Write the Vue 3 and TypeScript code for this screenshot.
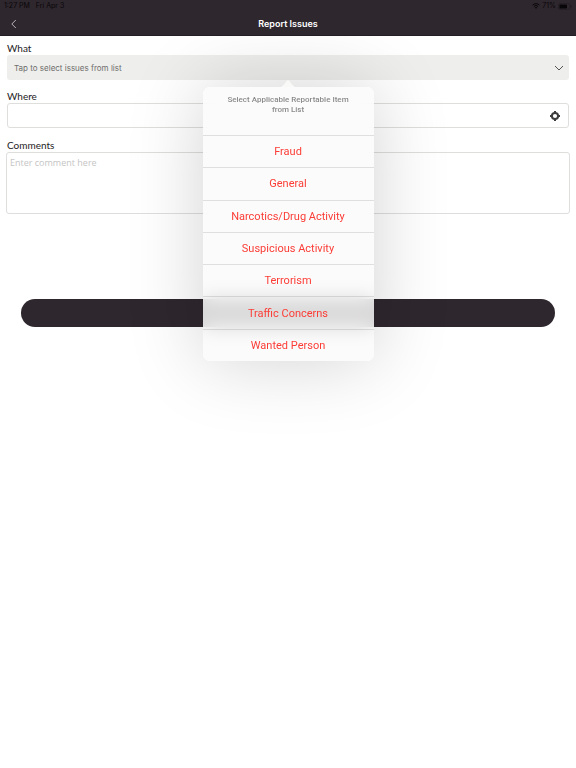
<script setup lang="ts">
import { ref } from 'vue'

const issues: string[] = [
  'Fraud',
  'General',
  'Narcotics/Drug Activity',
  'Suspicious Activity',
  'Terrorism',
  'Traffic Concerns',
  'Wanted Person',
]

const selected = ref('')
const place = ref('')
const comment = ref('')
const open = ref(true)

function choose(issue: string) {
  selected.value = issue
  open.value = false
}
</script>

<template>
  <div class="screen">
    <header class="top">
      <div class="status">
        <span>1:27 PM</span>
        <span>Fri Apr 3</span>
        <span class="status-right">
          <svg class="wifi" viewBox="0 0 16 12" aria-hidden="true">
            <path d="M1 4.2a10 10 0 0 1 14 0M3.600 7a6.200 6.200 0 0 1 8.800 0" fill="none" stroke="currentColor" stroke-width="2" />
            <path d="M5.500 9a3.600 3.600 0 0 1 5 0L8 11.600z" fill="currentColor" />
          </svg>
          <span>71%</span>
          <svg class="battery" viewBox="0 0 28 14" aria-hidden="true">
            <rect x="1" y="1" width="23" height="12" rx="3.500" fill="none" stroke="currentColor" stroke-opacity=".45" />
            <rect x="3" y="3" width="15" height="8" rx="1.500" fill="currentColor" />
            <path d="M25.500 5v4c1.300-.4 1.800-1.200 1.800-2s-.5-1.600-1.800-2z" fill="currentColor" fill-opacity=".5" />
          </svg>
        </span>
      </div>
      <nav class="bar">
        <button class="back" type="button" aria-label="Back">
          <svg viewBox="0 0 10 10" aria-hidden="true">
            <path d="M6.800 1 2.800 5l4 4" fill="none" stroke="currentColor" stroke-width=".9" />
          </svg>
        </button>
        <h1>Report Issues</h1>
      </nav>
    </header>

    <form class="form" @submit.prevent>
      <div class="field what">
        <label for="what">What</label>
        <button id="what" class="picker" type="button" :aria-expanded="open" @click="open = !open">
          <span>{{ selected || 'Tap to select issues from list' }}</span>
          <svg viewBox="0 0 10 10" aria-hidden="true">
            <path d="m1 3 4 4 4-4" fill="none" stroke="currentColor" stroke-width="1" />
          </svg>
        </button>
        <div v-if="open" class="popover" role="dialog" aria-labelledby="prompt">
          <svg class="arrow" viewBox="0 0 16 7" aria-hidden="true">
            <path d="M0 7C2 7 3 5.500 6.500 1.200Q8-.6 9.500 1.200C13 5.500 14 7 16 7z" fill="currentColor" />
          </svg>
          <div class="sheet">
            <p id="prompt" class="prompt">Select Applicable Reportable Item from List</p>
            <ul class="options">
              <li v-for="issue in issues" :key="issue">
                <button type="button" @click="choose(issue)">{{ issue }}</button>
              </li>
            </ul>
          </div>
        </div>
      </div>

      <div class="field">
        <label for="where">Where</label>
        <div class="where-box">
          <input id="where" v-model="place" type="text" />
          <button class="locate" type="button" aria-label="Use current location">
            <svg viewBox="0 0 12 12" aria-hidden="true">
              <circle cx="6" cy="6" r="3.100" fill="none" stroke="currentColor" stroke-width="2" />
              <path d="M6 1v2M6 9v2M1 6h2M9 6h2" stroke="currentColor" stroke-width="2" />
            </svg>
          </button>
        </div>
      </div>

      <div class="field comments">
        <label for="comments">Comments</label>
        <textarea id="comments" v-model="comment" placeholder="Enter comment here"></textarea>
      </div>

      <button class="submit" type="submit" aria-label="Submit report"></button>
    </form>
  </div>
</template>

<style>
body {
  margin: 0;
  background: #fff;
}
</style>

<style scoped>
.screen {
  min-height: 100vh;
  background: #fff;
  font-family: Inter, "Liberation Sans", sans-serif;
  color: #242124;
}
.screen *,
.screen {
  box-sizing: border-box;
}
button {
  margin: 0;
  padding: 0;
  border: 0;
  background: none;
  font: inherit;
  color: inherit;
  cursor: pointer;
}
.top {
  position: relative;
  z-index: 2;
  background: #2f272e;
  border-bottom: 1px solid #241d23;
}
.status {
  display: flex;
  align-items: center;
  gap: 6px;
  height: 12px;
  padding: 0 4px;
  font-size: 7px;
  line-height: 12px;
  color: #080608;
}
.status-right {
  display: flex;
  align-items: center;
  gap: 2px;
  margin-left: auto;
}
.wifi {
  width: 8px;
  height: 6px;
}
.battery {
  width: 14px;
  height: 7px;
}
.bar {
  display: grid;
  grid-template-columns: 28px 1fr 28px;
  align-items: center;
  height: 23px;
}
.back {
  display: grid;
  place-items: center;
  height: 23px;
  color: #c9c5c8;
}
.back svg {
  width: 10px;
  height: 10px;
}
h1 {
  margin: 0;
  text-align: center;
  font-family: Inter, sans-serif;
  font-size: 9px;
  line-height: 23px;
  font-weight: 600;
  color: #fff;
}
.form {
  display: flex;
  flex-direction: column;
  padding: 6px 7px;
}
.field {
  display: flex;
  flex-direction: column;
  margin-bottom: 10px;
}
label {
  font-family: Lato, "Liberation Sans", sans-serif;
  font-size: 10px;
  line-height: 13px;
}
.what {
  position: relative;
  z-index: 1;
}
.picker {
  display: flex;
  align-items: center;
  justify-content: space-between;
  height: 25px;
  padding: 0 5px 0 7px;
  border-radius: 3px;
  background: #eeeeec;
  font-family: Inter, "Liberation Sans", sans-serif;
  font-size: 8px;
  color: #6e6e6d;
}
.picker svg {
  width: 10px;
  height: 10px;
  color: #555;
}
.where-box {
  display: flex;
  height: 25px;
  border: 1px solid #dededd;
  border-radius: 3px;
}
.where-box input {
  flex: 1;
  min-width: 0;
  padding: 0 7px;
  border: 0;
  outline: 0;
  background: none;
  font-size: 8px;
}
.locate {
  display: grid;
  place-items: center;
  width: 26px;
  color: #3d3d3d;
}
.locate svg {
  width: 12px;
  height: 12px;
}
.comments {
  padding-top: 1px;
}
textarea {
  height: 62px;
  margin: 0 -1px;
  padding: 4px 3px;
  border: 1px solid #dededd;
  border-radius: 3px;
  outline: 0;
  resize: none;
  background: none;
  font-family: "Open Sans", sans-serif;
  font-size: 9px;
  line-height: 12px;
}
textarea::placeholder {
  color: #c5c5c5;
  opacity: 1;
}
.submit {
  height: 28px;
  margin: 75px 14px 0;
  border-radius: 14px;
  background: #2f272e;
}
.popover {
  position: absolute;
  top: 100%;
  left: 0;
  right: 0;
  display: flex;
  flex-direction: column;
  align-items: center;
  pointer-events: none;
}
.arrow {
  width: 16px;
  height: 7px;
  position: relative;
  z-index: 1;
  color: #f9f9f8;
}
.sheet {
  width: 171px;
  border-radius: 7px;
  background: rgba(250, 250, 250, 0.83);
  backdrop-filter: blur(10px);
  box-shadow: 0 0 76px rgba(12, 12, 8, 0.18);
  pointer-events: auto;
}
.prompt {
  height: 48px;
  margin: 0;
  padding: 8px 20px 0;
  text-align: center;
  font-family: Roboto, sans-serif;
  font-size: 8px;
  line-height: 10px;
  font-weight: 500;
  color: #8b8b8b;
}
.options {
  display: grid;
  grid-auto-rows: 1fr;
  height: 226px;
  margin: 0;
  padding: 0;
  list-style: none;
}
.options li {
  display: flex;
  border-top: 1px solid rgba(60, 60, 60, 0.14);
}
.options button {
  flex: 1;
  font-family: Roboto, sans-serif;
  font-size: 11px;
  color: #fb3d36;
}
</style>
